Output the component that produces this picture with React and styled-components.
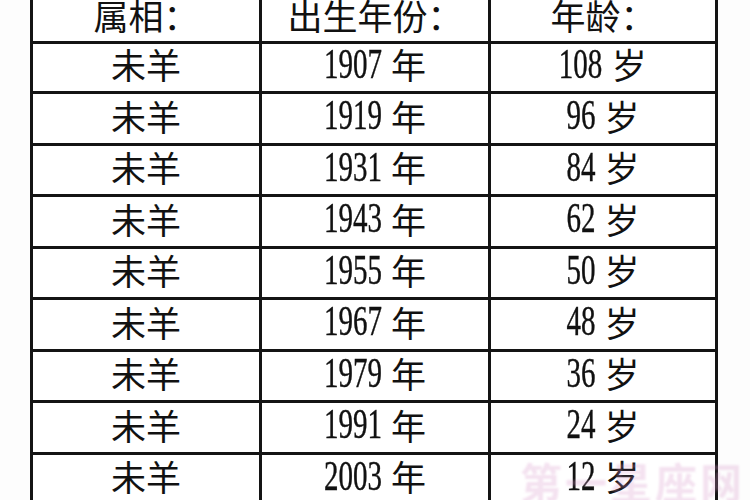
import React from 'react';
import styled, { createGlobalStyle } from 'styled-components';

const GlobalStyle = createGlobalStyle`
  html, body {
    margin: 0;
    padding: 0;
    background: #fff;
  }
  body {
    overflow: hidden;
  }
`;

const rows = [
  ['1907', '108'],
  ['1919', '96'],
  ['1931', '84'],
  ['1943', '62'],
  ['1955', '50'],
  ['1967', '48'],
  ['1979', '36'],
  ['1991', '24'],
  ['2003', '12'],
];

const Page = styled.div`
  position: relative;
  width: 750px;
  height: 500px;
  overflow: hidden;
  background: #fdfdfd;
`;

const Table = styled.div`
  display: grid;
  grid-template-columns: 229px 229px 224px;
  grid-auto-rows: 51.5px;
  width: 682px;
  margin: -9px 0 0 30px;
  border-left: 3px solid #141414;
  border-right: 3px solid #141414;
  background: #fff;
`;

const Cell = styled.div`
  box-sizing: border-box;
  display: flex;
  align-items: center;
  justify-content: center;
  height: ${p => (p.$head ? '53px' : '51.5px')};
  padding-bottom: ${p => (p.$head ? '4px' : '6px')};
  border-bottom: 3px solid #141414;
  border-right: ${p => (p.$last ? 'none' : '3px solid #141414')};
  color: #111;
  font-family: "Noto Sans CJK SC", "Noto Sans", sans-serif;
  font-size: 35px;
  font-weight: 400;
  line-height: 1;
  white-space: nowrap;
`;

const Num = styled.span`
  display: inline-block;
  font-family: "Liberation Serif", serif;
  font-size: 42px;
  transform: scaleX(0.69);
  margin: 0 ${p => -p.$n * 3.25}px;
  vertical-align: -2px;
  -webkit-text-stroke: 0.4px #111;
`;

const Unit = styled.span`
  margin-left: 9px;
`;

const Watermark = styled.div`
  position: absolute;
  left: 520px;
  top: 460px;
  font-family: "Noto Sans CJK SC", sans-serif;
  font-size: 42px;
  font-weight: 700;
  letter-spacing: 3px;
  line-height: 1;
  color: rgba(214, 150, 200, 0.28);
  filter: blur(0.8px);
  pointer-events: none;
`;

export default function App() {
  return (
    <Page>
      <GlobalStyle />
      <Table>
        <Cell $head>属相：</Cell>
        <Cell $head>出生年份：</Cell>
        <Cell $head $last>年龄：</Cell>
        {rows.map(([year, age]) => (
          <React.Fragment key={year}>
            <Cell>未羊</Cell>
            <Cell>
              <Num $n={year.length}>{year}</Num>
              <Unit>年</Unit>
            </Cell>
            <Cell $last>
              <Num $n={age.length}>{age}</Num>
              <Unit>岁</Unit>
            </Cell>
          </React.Fragment>
        ))}
      </Table>
      <Watermark>第一星座网</Watermark>
    </Page>
  );
}
